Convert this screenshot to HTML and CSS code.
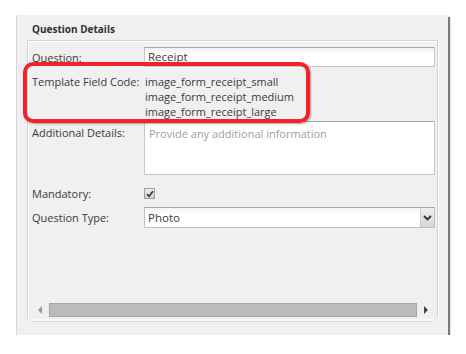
FILE: index.html
```html
<!DOCTYPE html>
<html>
<head>
<meta charset="utf-8">
<link rel="stylesheet" href="styles.css">
</head>
<body>
<div class="panel">
  <div class="title">Question Details</div>
  <div class="fieldset">
    <div class="form">
      <div class="label row1">Question:</div>
      <div class="input row1"><span>Receipt</span></div>

      <div class="label row2">Template Field Code:</div>
      <div class="codes row2">
        <div>image_form_receipt_small</div>
        <div>image_form_receipt_medium</div>
        <div>image_form_receipt_large</div>
      </div>

      <div class="label row3">Additional Details:</div>
      <div class="textarea row3">Provide any additional information</div>

      <div class="label row4">Mandatory:</div>
      <div class="row4 checkcell">
        <span class="checkbox">
          <svg width="8" height="8" viewBox="0 0 8 8"><path d="M1 4.2 L3 6.3 L7 1.2" fill="none" stroke="#333" stroke-width="1.6"/></svg>
        </span>
      </div>

      <div class="label row5">Question Type:</div>
      <div class="select row5">
        <span>Photo</span>
        <span class="dropbtn">
          <svg width="9" height="6" viewBox="0 0 9 6"><path d="M1 1 L4.5 4.5 L8 1" fill="none" stroke="#333" stroke-width="1.8"/></svg>
        </span>
      </div>
    </div>
    <div class="scrollbar">
      <span class="arrow left"></span>
      <span class="thumb"></span>
      <span class="arrow right"></span>
    </div>
  </div>
  <div class="bottomline"></div>
  <div class="highlight"></div>
</div>
</body>
</html>
```
FILE: styles.css
```css
html, body {
  margin: 0;
  padding: 0;
  background: #ffffff;
}
body {
  font-family: "Open Sans", "DejaVu Sans", sans-serif;
  font-size: 11px;
  color: #3a3a3a;
}
.panel {
  position: relative;
  margin: 15px 0 0 16px;
  width: 431px;
  height: 320px;
  background: #f0f0f0;
  border-left: 1px solid #d6d6d6;
  box-shadow: 2px 2px 1px #7a7a7a;
  display: flex;
  flex-direction: column;
}
.title {
  font-weight: bold;
  font-size: 10px;
  color: #333;
  padding: 6px 0 0 15px;
  height: 19px;
  line-height: 16px;
}
.fieldset {
  margin-left: 10px;
  width: 409px;
  height: 277px;
  border: 1px solid #d4d4d4;
  border-bottom: none;
  box-shadow: inset 1px 1px 0 #ffffff, 1px 0 0 #ffffff;
  display: flex;
  flex-direction: column;
}
.form {
  display: grid;
  grid-template-columns: 112px 291px;
  padding: 6px 0 0 4px;
  line-height: 15px;
}
.label {
  align-self: start;
}
.row1 { margin-top: 0; }
.row1.label { padding-top: 3px; }
.input {
  height: 18px;
  border: 1px solid #c8c8c8;
  border-top-color: #a8a8a8;
  background: linear-gradient(#eef1f1, #ffffff 6px);
  padding-left: 3px;
  line-height: 18px;
  font-size: 11.5px;
}
.row2 { margin-top: 7px; }
.codes {
  padding-left: 1px;
}
.row3 { margin-top: 2px; }
.row3.label { padding-top: 4px; }
.textarea {
  border: 1px solid #c8c8c8;
  border-top-color: #a8a8a8;
  background: #ffffff;
  color: #9aa0a6;
  padding: 4px 0 0 4px;
  box-sizing: border-box;
  height: 54px;
}
.row4 { margin-top: 11px; }
.checkcell {
  height: 15px;
  display: flex;
  align-items: center;
}
.checkbox {
  width: 9px;
  height: 9px;
  border: 1px solid #a0a0a0;
  background: linear-gradient(#ececec, #d0d0d0);
  display: flex;
  align-items: center;
  justify-content: center;
}
.row5 { margin-top: 6px; }
.row5.label { padding-top: 3px; }
.select {
  height: 19px;
  border: 1px solid #c0c0c0;
  border-top-color: #a8a8a8;
  background: linear-gradient(#f2f4f4, #ffffff 6px);
  display: flex;
  align-items: center;
  justify-content: space-between;
  padding-left: 3px;
  font-size: 11.5px;
}
.dropbtn {
  width: 13px;
  height: 19px;
  border-left: 1px solid #c8c8c8;
  background: linear-gradient(#f0f0f0, #d6d6d6);
  display: flex;
  align-items: center;
  justify-content: center;
}
.scrollbar {
  margin-top: auto;
  margin-bottom: 1px;
  height: 14px;
  display: flex;
  align-items: center;
  padding-left: 10px;
}
.arrow {
  width: 0;
  height: 0;
  border-top: 4px solid transparent;
  border-bottom: 4px solid transparent;
}
.arrow.left {
  border-right: 4px solid #9a9a9a;
}
.arrow.right {
  border-left: 4px solid #444444;
  margin-left: 7px;
}
.thumb {
  margin-left: 7px;
  width: 366px;
  height: 12px;
  background: #bbbbbb;
  border: 1px solid #a6a6a6;
}
.bottomline {
  margin: 1px 0 0 15px;
  width: 402px;
  height: 1px;
  border-top: 2px solid #fafafa;
  background: #d8d8d8;
}
.highlight {
  position: absolute;
  left: 6px;
  top: 47px;
  width: 279px;
  height: 53px;
  border: 4px solid #f2222b;
  border-radius: 10px;
  box-shadow: 1px 1px 2px rgba(0,0,0,0.35);
}
```
